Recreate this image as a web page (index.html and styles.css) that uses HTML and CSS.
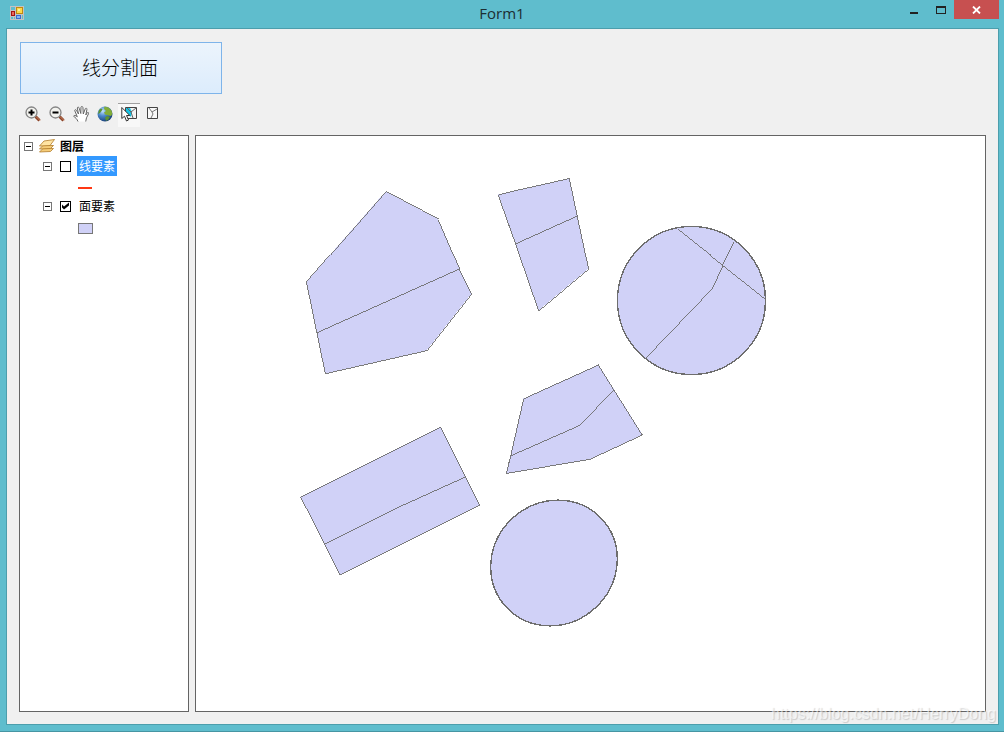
FILE: index.html
```html
<!DOCTYPE html>
<html lang="zh-CN">
<head>
<meta charset="utf-8">
<title>Form1</title>
<link rel="stylesheet" href="styles.css">
</head>
<body class="window">
<header class="titlebar">
  <svg class="app-icon" width="14" height="14" viewBox="0 0 14 14" shape-rendering="crispEdges" aria-hidden="true">
    <rect width="14" height="14" fill="#c3c3c3"/>
    <path d="M1 1h4v3H1zM1 11h2v2H1zM4 11h1v2H4zM12 9h1v4h-1z" fill="#5fbdcd"/>
    <rect x="6" y="1" width="7" height="7" fill="#c08a10"/><rect x="7" y="2" width="5" height="5" fill="#ffd84a"/><rect x="8" y="3" width="2" height="2" fill="#fff0a0"/>
    <rect x="1" y="5" width="4" height="5" fill="#a51414"/><rect x="2" y="6" width="2" height="3" fill="#ea6a5c"/>
    <rect x="6" y="9" width="5" height="4" fill="#3a6fd0"/><rect x="7" y="10" width="3" height="2" fill="#86b4f5"/>
  </svg>
  <h1 class="title">Form1</h1>
  <div class="controls">
    <button class="control" type="button" aria-label="最小化"><svg width="10" height="10" viewBox="0 0 10 10"><path d="M1 7h8v2H1z" fill="#222"/></svg></button>
    <button class="control" type="button" aria-label="最大化"><svg width="10" height="8" viewBox="0 0 10 8" shape-rendering="crispEdges"><path d="M0 0h10v8H0zM1 2v5h8V2z" fill="#222" fill-rule="evenodd"/></svg></button>
    <button class="control close" type="button" aria-label="关闭"><svg width="9" height="8" viewBox="0 0 9 8"><path d="M1 .5l7 7M8 .5l-7 7" stroke="#fff" stroke-width="1.800"/></svg></button>
  </div>
</header>
<main class="client">
  <button class="split-button" type="button">线分割面</button>
  <div class="toolbar" role="toolbar" aria-label="地图工具">
    <button class="tool" type="button" aria-label="放大"><svg width="16" height="16" viewBox="0 0 16 16"><path d="M10.500 10.500l4 4" stroke="#8b4226" stroke-width="3"/><path d="M11 10.500l4 4" stroke="#c98465"/><circle cx="6.500" cy="6.500" r="5.500" fill="#f2f2ee" stroke="#858585" stroke-width="1.300"/><path d="M6.500 3.500v6M3.500 6.500h6" stroke="#000" stroke-width="2"/></svg></button>
    <button class="tool" type="button" aria-label="缩小"><svg width="16" height="16" viewBox="0 0 16 16"><path d="M10.500 10.500l4 4" stroke="#8b4226" stroke-width="3"/><path d="M11 10.500l4 4" stroke="#c98465"/><circle cx="6.500" cy="6.500" r="5.500" fill="#f2f2ee" stroke="#858585" stroke-width="1.300"/><path d="M3.500 6.500h6" stroke="#000" stroke-width="2"/></svg></button>
    <button class="tool" type="button" aria-label="平移"><svg width="16" height="16" viewBox="0 0 16 16"><path d="M5 15.500C4 13 2.500 11.500.6 10.300c.5-1.300 2-1 3.700.5L1.700 4.500c.2-1.200 1.500-1 2 .2L5.500 8 4.300 2c.3-1.300 1.600-1.100 1.900.2L7.800 7.500 8 1.200c.3-1.100 1.600-1 1.900.2L10.300 8l2-5.300c.7-1 1.800-.4 1.600.8L12.800 9l1.500-2.300c.8-.7 1.700 0 1.200 1.100l-2 4-.8 3.700" fill="#fff" stroke="#666" stroke-width="1"/></svg></button>
    <button class="tool" type="button" aria-label="全图"><svg width="16" height="16" viewBox="0 0 16 16"><defs><radialGradient id="sea" cx=".35" cy=".3" r=".75"><stop offset="0" stop-color="#c4e4ff"/><stop offset=".45" stop-color="#4b87cc"/><stop offset="1" stop-color="#173c72"/></radialGradient></defs><circle cx="8" cy="8" r="7.500" fill="url(#sea)"/><path d="M7.500.6l4 .8L14.500 4.500l.8 3.500-1.300 2-3-.8L8 8.500l-1-2 2-1.500L7 3z" fill="#83ad38"/><path d="M10 10l3 1-2 3-2 .8-1-3zM2 4l2-1.500 1.500 1L3 7 1 8z" fill="#5d9231"/></svg></button>
    <button class="tool active" type="button" aria-label="选择要素" aria-pressed="true"><svg width="16" height="16" viewBox="0 0 16 16"><path d="M4.500 1.500h11v11h-11z" fill="#f4f4f4" stroke="#444"/><path d="M5 2h4l2 4-1 5-5-5z" fill="#13c4e5"/><path d="M10 6l5-4M10 6l2 6M6 2l4 4" stroke="#666" fill="none"/><path d="M.8 1.500v11l2.700-2.300 2 4.800 2-1-2-4.500h3.300z" fill="#fff" stroke="#333"/></svg></button>
    <button class="tool" type="button" aria-label="清除选择"><svg width="16" height="16" viewBox="0 0 16 16"><path d="M2.500 1.500h10v11h-10z" fill="#f8f8f8" stroke="#444"/><path d="M4 2l3 4 5-3M7 6l1 2-2 4" stroke="#777" fill="none"/></svg></button>
  </div>
  <div class="workspace">
    <section class="panel" aria-label="图层">
      <ul class="tree">
        <li>
          <div class="row"><button class="expander" type="button" aria-label="折叠图层"></button>
            <svg class="layers-icon" width="16" height="14" viewBox="0 0 16 14"><g fill="#f5cc78" stroke="#b17b29" stroke-width=".8"><path d="M.5 13L4 9.500h10.500l-3 3z"/><path d="M.5 10L4 6.500h10.500l-3 3z"/><path d="M.5 7L5 2l10.500-1.500L11 6.500z" fill="#ffe4a3"/></g></svg>
            <strong class="group-name">图层</strong></div>
          <ul class="branch">
            <li><div class="row"><button class="expander" type="button" aria-label="折叠线要素"></button><input class="check" type="checkbox" id="lines"><label class="layer selected" for="lines">线要素</label></div>
              <div class="legend"><span class="line-symbol"></span></div></li>
            <li><div class="row"><button class="expander" type="button" aria-label="折叠面要素"></button><input class="check" type="checkbox" id="areas" checked><label class="layer" for="areas">面要素</label></div>
              <div class="legend"><span class="fill-symbol"></span></div></li>
          </ul>
        </li>
      </ul>
    </section>
    <section class="panel" aria-label="地图">
      <svg class="map" viewBox="196 136 789 575" preserveAspectRatio="xMinYMin meet" shape-rendering="crispEdges" role="img" aria-label="已分割的面要素">
        <g class="shape">
          <path d="M385.500 191.500L438.500 219.500 459.500 268.500 471.500 293.500 426.500 350.500 325.500 373.500 306.500 281.500z"/>
          <path class="cut" d="M316.500 332.500L459.500 268.500"/>
          <path d="M498.500 194.500L569.500 178.500 588.500 268.500 538.500 310.500z"/>
          <path class="cut" d="M515.500 243.500L577.500 215.500"/>
          <path d="M598.500 364.500L642.500 434.500 588.500 459.500 506.500 473.500 523.500 398.500z"/>
          <path class="cut" d="M510.500 455.500L578.500 425.500 613.500 389.500"/>
          <path d="M300.500 496.500L440.500 426.500 479.500 504.500 339.500 574.500z"/>
          <path class="cut" d="M324.500 543.500L392.500 509.500 465.500 476.500"/>
          <circle class="round" cx="691.500" cy="300.500" r="74"/>
          <path class="cut" d="M677.500 229.500L765.500 299.500M733.500 241.500L722.500 265.500 712.500 287.500 645.500 357.500"/>
          <ellipse class="round" cx="554" cy="563" rx="65" ry="61" transform="rotate(-42 554 563)"/>
        </g>
      </svg>
    </section>
  </div>
</main>
<div class="watermark">https://blog.csdn.net/HerryDong</div>
</body>
</html>
```
FILE: styles.css
```css
* { box-sizing: border-box; }
button { padding: 0; border: 0; background: none; font: inherit; color: inherit; }
ul { margin: 0; padding: 0; list-style: none; }

.window {
  position: relative;
  display: flex;
  flex-direction: column;
  height: 100vh;
  margin: 0;
  border-bottom: 1px solid #4795a3;
  background: #5fbdcd;
  font: 12px/20px "Noto Sans CJK SC", sans-serif;
  color: #000;
}

.titlebar {
  display: grid;
  grid-template-columns: 1fr auto 1fr;
  height: 28px;
  padding: 0 5px 0 10px;
}
.app-icon { margin-top: 6px; }
.title {
  margin: 0 5px 0 0;
  font: 15px/26px "Open Sans", sans-serif;
  color: #1c2e32;
}
.controls { display: flex; justify-content: flex-end; }
.control {
  display: flex;
  align-items: center;
  justify-content: center;
  width: 27px;
  height: 19px;
}
.close { width: 45px; background: #c75050; }

.client {
  flex: 1;
  display: flex;
  flex-direction: column;
  min-height: 0;
  margin: 0 5px 6px 6px;
  padding: 13px 12px 12px;
  border: 1px solid #4c9eac;
  background: #f0f0f0;
}
.split-button {
  width: 202px;
  height: 52px;
  margin-left: 1px;
  padding: 0 2px 2px 0;
  flex: none;
  border: 1px solid #7eb4ea;
  background: linear-gradient(#ecf4fc, #dcecfc);
  font-size: 19px;
  font-weight: 300;
}

.toolbar { display: flex; gap: 2px; padding: 9px 0 8px 3px; }
.tool {
  display: flex;
  justify-content: center;
  width: 22px;
  height: 24px;
  padding-top: 2px;
  border-top: 1px solid transparent;
}
.tool.active { border-top-color: #a0a0a0; background: #f8f8f8; }

.workspace {
  flex: 1;
  display: grid;
  grid-template-columns: 170px 1fr;
  gap: 6px;
  min-height: 0;
}
.panel { min-width: 0; min-height: 0; border: 1px solid #646464; background: #fff; overflow: hidden; }

.tree { padding-left: 4px; }
.branch { padding-left: 19px; }
.row { display: flex; align-items: center; height: 20px; }
.expander {
  width: 9px;
  height: 9px;
  border: 1px solid #777;
  background: linear-gradient(#000, #000) center / 5px 1px no-repeat;
}
.layers-icon { margin: 0 5px 0 6px; }
.check {
  appearance: none;
  width: 11px;
  height: 11px;
  margin: 0 6px 0 8px;
  border: 1px solid #000;
  background: #fff;
}
.check:checked::before {
  content: "";
  display: block;
  width: 9px;
  height: 9px;
  background: #000;
  clip-path: polygon(1px 3px, 3px 5px, 8px 1px, 8px 4px, 3px 8px, 1px 6px);
}
.layer { padding: 0 2px; }
.selected { background: #3399ff; color: #fff; }
.legend { display: flex; align-items: center; height: 20px; padding: 4px 0 0 35px; }
.line-symbol { width: 14px; height: 2px; background: #ff3814; }
.fill-symbol { width: 15px; height: 11px; border: 1px solid #777; background: #d0d1f7; }

.map { display: block; width: 100%; height: 100%; }
.shape { fill: #d0d1f7; stroke: #6e6e6e; stroke-width: .9; }
.shape .cut { fill: none; }
.round { stroke-width: 1.4; }

.watermark {
  position: absolute;
  right: 8px;
  bottom: 6px;
  font: 16px/22px "Liberation Sans", sans-serif;
  color: rgba(255, 255, 255, .6);
  text-shadow: 1px 1px 1px rgba(0, 0, 0, .16);
  pointer-events: none;
}
```
